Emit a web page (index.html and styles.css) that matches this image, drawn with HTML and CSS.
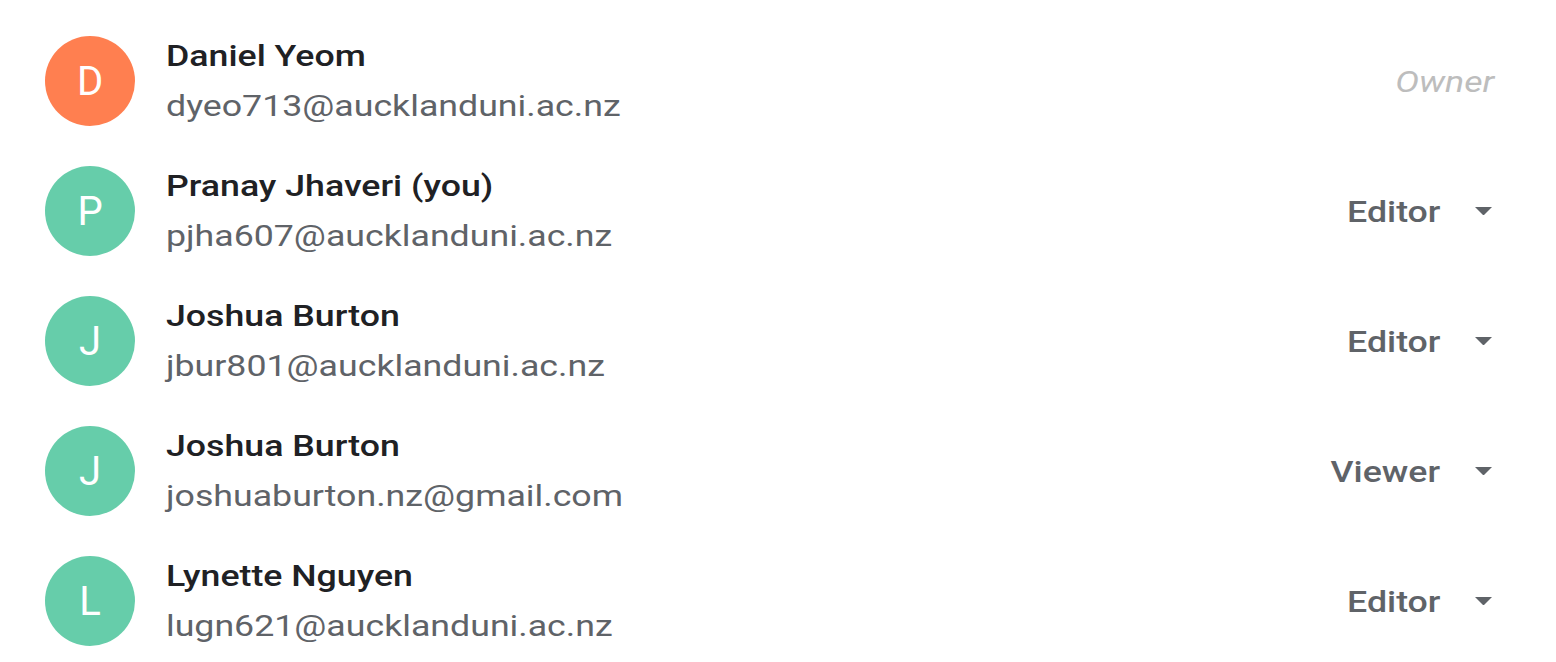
FILE: index.html
```html
<!DOCTYPE html>
<html lang="en">
<head>
<meta charset="utf-8">
<title>Share list</title>
<link rel="stylesheet" href="styles.css">
</head>
<body>
<ul class="people">
  <li class="person">
    <div class="avatar avatar-owner">D</div>
    <div class="info">
      <div class="name"><span class="wide">Daniel Yeom</span></div>
      <div class="email"><span class="wide">dyeo713@aucklanduni.ac.nz</span></div>
    </div>
    <div class="owner"><span class="wide-r">Owner</span></div>
  </li>
  <li class="person">
    <div class="avatar">P</div>
    <div class="info">
      <div class="name"><span class="wide">Pranay Jhaveri (you)</span></div>
      <div class="email"><span class="wide">pjha607@aucklanduni.ac.nz</span></div>
    </div>
    <div class="role"><span class="wide-r">Editor</span><svg class="caret" viewBox="0 0 10 5" width="17" height="8.5"><path d="M0 0l5 5 5-5z"/></svg></div>
  </li>
  <li class="person">
    <div class="avatar">J</div>
    <div class="info">
      <div class="name"><span class="wide">Joshua Burton</span></div>
      <div class="email"><span class="wide">jbur801@aucklanduni.ac.nz</span></div>
    </div>
    <div class="role"><span class="wide-r">Editor</span><svg class="caret" viewBox="0 0 10 5" width="17" height="8.5"><path d="M0 0l5 5 5-5z"/></svg></div>
  </li>
  <li class="person">
    <div class="avatar">J</div>
    <div class="info">
      <div class="name"><span class="wide">Joshua Burton</span></div>
      <div class="email"><span class="wide">joshuaburton.nz@gmail.com</span></div>
    </div>
    <div class="role"><span class="wide-r">Viewer</span><svg class="caret" viewBox="0 0 10 5" width="17" height="8.5"><path d="M0 0l5 5 5-5z"/></svg></div>
  </li>
  <li class="person">
    <div class="avatar">L</div>
    <div class="info">
      <div class="name"><span class="wide">Lynette Nguyen</span></div>
      <div class="email"><span class="wide">lugn621@aucklanduni.ac.nz</span></div>
    </div>
    <div class="role"><span class="wide-r">Editor</span><svg class="caret" viewBox="0 0 10 5" width="17" height="8.5"><path d="M0 0l5 5 5-5z"/></svg></div>
  </li>
</ul>
</body>
</html>
```
FILE: styles.css
```css
html, body {
  margin: 0;
  padding: 0;
  background: #ffffff;
  font-family: Roboto, "Noto Sans", Arial, sans-serif;
}
.people {
  list-style: none;
  margin: 0;
  padding: 16px 0 0 0;
}
.person {
  display: flex;
  align-items: center;
  height: 130px;
  padding: 0 64px 0 45px;
}
.avatar {
  flex: 0 0 90px;
  width: 90px;
  height: 90px;
  border-radius: 50%;
  background: #66cdaa;
  color: #ffffff;
  font-size: 40px;
  display: flex;
  align-items: center;
  justify-content: center;
}
.avatar-owner {
  background: #ff7f50;
}
.info {
  margin-left: 31px;
  display: flex;
  flex-direction: column;
}
.wide {
  display: inline-block;
  transform: scaleX(1.19);
  transform-origin: left center;
}
.wide-r {
  display: inline-block;
  transform: scaleX(1.19);
  transform-origin: right center;
}
.name {
  font-size: 30px;
  font-weight: 500;
  line-height: 50px;
  color: #202124;
}
.email {
  font-size: 30px;
  line-height: 50px;
  color: #5f6368;
}
.owner {
  margin-left: auto;
  margin-right: -2px;
  font-size: 30px;
  font-style: italic;
  color: #bdbdbd;
}
.role {
  margin-left: auto;
  display: flex;
  align-items: center;
  font-size: 30px;
  font-weight: 500;
  color: #5f6368;
}
.caret {
  margin-left: 35px;
  fill: #5f6368;
}
```
